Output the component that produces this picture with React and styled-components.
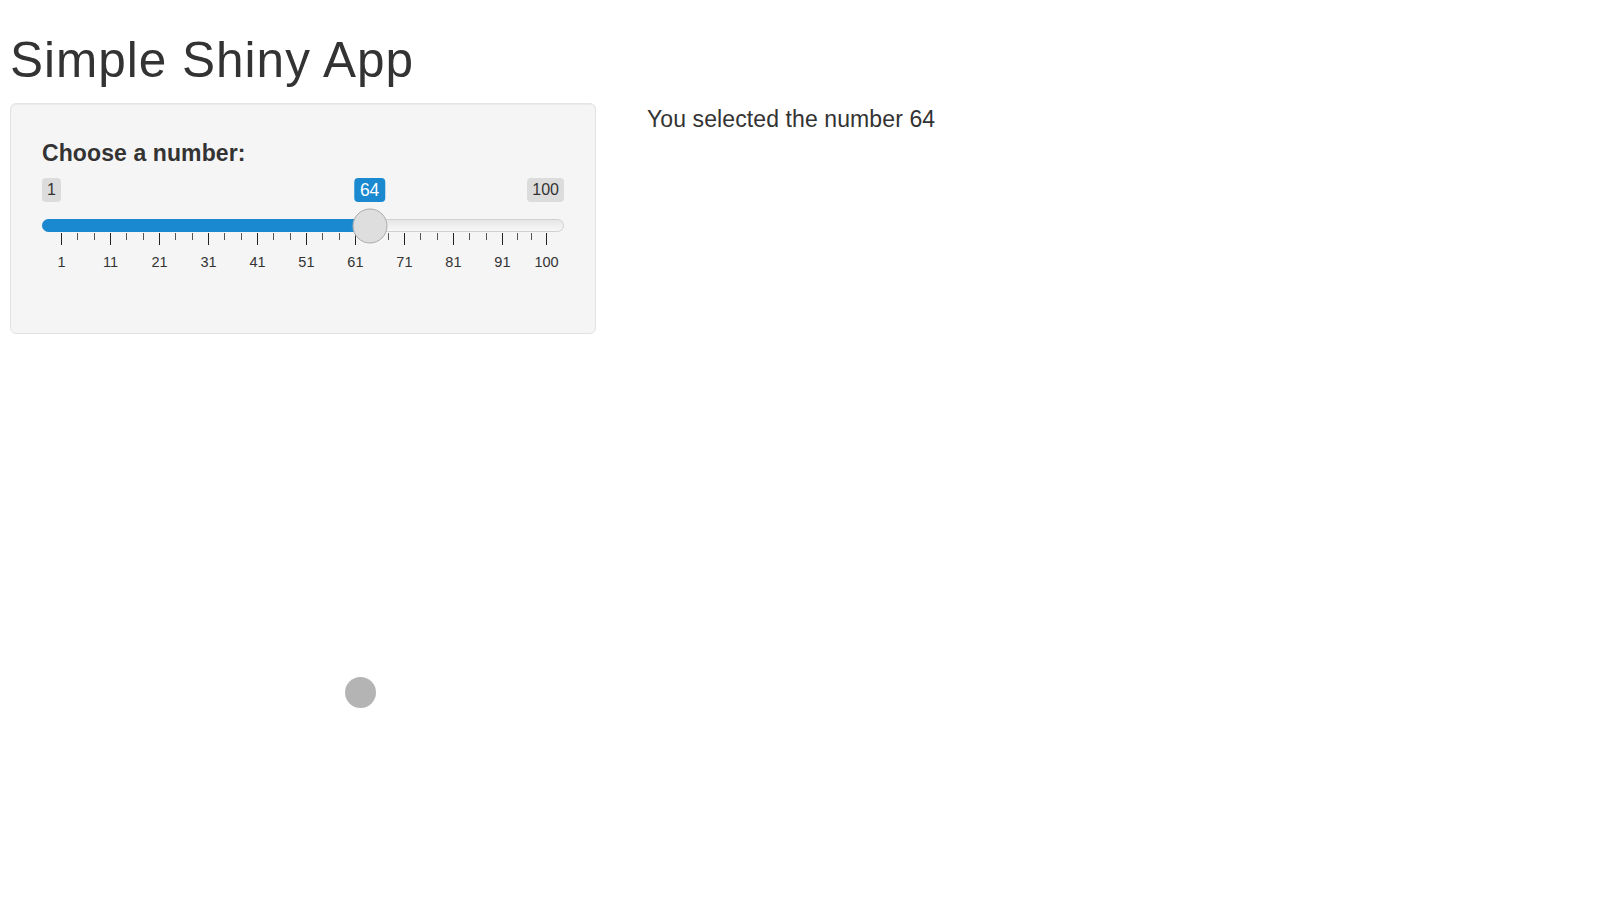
import React from 'react';
import styled, { createGlobalStyle } from 'styled-components';

const GlobalStyle = createGlobalStyle`
  html, body {
    margin: 0;
    padding: 0;
    background: #fff;
  }
  body {
    font-family: "Liberation Sans", Arial, Helvetica, sans-serif;
    color: #333;
  }
`;

const Page = styled.div`
  position: relative;
  min-height: 100vh;
  padding: 33px 10px 0;
  box-sizing: border-box;
`;

const Title = styled.h2`
  margin: 0 0 16px;
  font-size: 49.5px;
  font-weight: 500;
  line-height: 1.1;
  letter-spacing: 1px;
  color: #333;
`;

const Row = styled.div`
  display: flex;
  align-items: flex-start;
  gap: 51px;
`;

const Well = styled.div`
  width: 586px;
  box-sizing: border-box;
  padding: 33px 31px 60px;
  background: #f5f5f5;
  border: 1px solid #e3e3e3;
  border-radius: 6px;
  box-shadow: inset 0 1px 1px rgba(0, 0, 0, 0.05);
`;

const Label = styled.label`
  display: block;
  margin-bottom: 8px;
  font-size: 23px;
  font-weight: 700;
  line-height: 33px;
  letter-spacing: 0.1px;
`;

const Output = styled.div`
  font-size: 23px;
  line-height: 33px;
  letter-spacing: 0.1px;
`;

const Slider = styled.div`
  position: relative;
  width: 100%;
`;

const BadgeRow = styled.div`
  position: relative;
  display: flex;
  justify-content: space-between;
  height: 24px;
`;

const Badge = styled.span`
  display: inline-flex;
  align-items: center;
  justify-content: center;
  height: 24px;
  padding: 0 ${(p) => (p.$active ? 6 : 5)}px;
  box-sizing: border-box;
  border-radius: 4px;
  font-size: ${(p) => (p.$active ? 17.5 : 16)}px;
  background: ${(p) => (p.$active ? '#1a89d0' : 'rgba(0, 0, 0, 0.1)')};
  color: ${(p) => (p.$active ? '#fff' : '#333')};
`;

const FloatingBadge = styled(Badge)`
  position: absolute;
  top: 0;
  transform: translateX(-50%);
`;

const Track = styled.div`
  position: relative;
  z-index: 1;
  margin-top: 17px;
  height: 13px;
  box-sizing: border-box;
  border: 1px solid #d0d0d0;
  border-radius: 8px;
  background: linear-gradient(to bottom, #dedede -50%, #ffffff 150%);
`;

const Fill = styled.div`
  position: absolute;
  left: -1px;
  top: -1px;
  bottom: -1px;
  border-radius: 8px 0 0 8px;
  background: #1a89d0;
`;

const Handle = styled.div`
  position: absolute;
  top: 50%;
  width: 35px;
  height: 35px;
  box-sizing: border-box;
  border: 1px solid #aaa;
  border-radius: 50%;
  background: #dedede;
  box-shadow: 1px 1px 3px rgba(255, 255, 255, 0.3);
  transform: translate(-50%, -50%);
`;

const Grid = styled.div`
  position: relative;
  margin-top: 1px;
  height: 40px;
`;

const Tick = styled.span`
  position: absolute;
  top: 0;
  width: 1px;
  height: ${(p) => (p.$major ? 12 : 7)}px;
  background: ${(p) => (p.$major ? '#222' : '#555')};
`;

const TickLabel = styled.span`
  position: absolute;
  top: 21px;
  font-size: 14.5px;
  line-height: 16px;
  color: #333;
  transform: translateX(-50%);
  white-space: nowrap;
`;

const TouchDot = styled.div`
  position: absolute;
  left: 345px;
  top: 677px;
  width: 31px;
  height: 31px;
  border-radius: 50%;
  background: #b4b4b4;
`;

const MIN = 1;
const MAX = 100;
const VALUE = 64;
const GRID_LEFT = 19;
const GRID_WIDTH = 485;
const MAJORS = [1, 11, 21, 31, 41, 51, 61, 71, 81, 91, 100];

const xOf = (v) => GRID_LEFT + ((v - MIN) / (MAX - MIN)) * GRID_WIDTH;

const NumberSlider = ({ value }) => {
  const minors = [];
  for (let i = 0; i < MAJORS.length - 1; i++) {
    const a = xOf(MAJORS[i]);
    const b = xOf(MAJORS[i + 1]);
    minors.push(a + (b - a) / 3, a + (2 * (b - a)) / 3);
  }

  return (
    <Slider>
      <BadgeRow>
        <Badge>{MIN}</Badge>
        <FloatingBadge $active style={{ left: xOf(value) }}>
          {value}
        </FloatingBadge>
        <Badge>{MAX}</Badge>
      </BadgeRow>
      <Track>
        <Fill style={{ width: xOf(value) + 1 }} />
        <Handle style={{ left: xOf(value) - 1 }} />
      </Track>
      <Grid>
        {minors.map((x, i) => (
          <Tick key={'m' + i} style={{ left: Math.round(x) }} />
        ))}
        {MAJORS.map((v) => (
          <React.Fragment key={v}>
            <Tick $major style={{ left: Math.round(xOf(v)) }} />
            <TickLabel style={{ left: xOf(v) + 0.5 }}>{v}</TickLabel>
          </React.Fragment>
        ))}
      </Grid>
    </Slider>
  );
};

const App = () => (
  <Page>
    <GlobalStyle />
    <Title>Simple Shiny App</Title>
    <Row>
      <Well>
        <Label htmlFor="num">Choose a number:</Label>
        <NumberSlider value={VALUE} />
      </Well>
      <Output>You selected the number {VALUE}</Output>
    </Row>
    <TouchDot />
  </Page>
);

export default App;
